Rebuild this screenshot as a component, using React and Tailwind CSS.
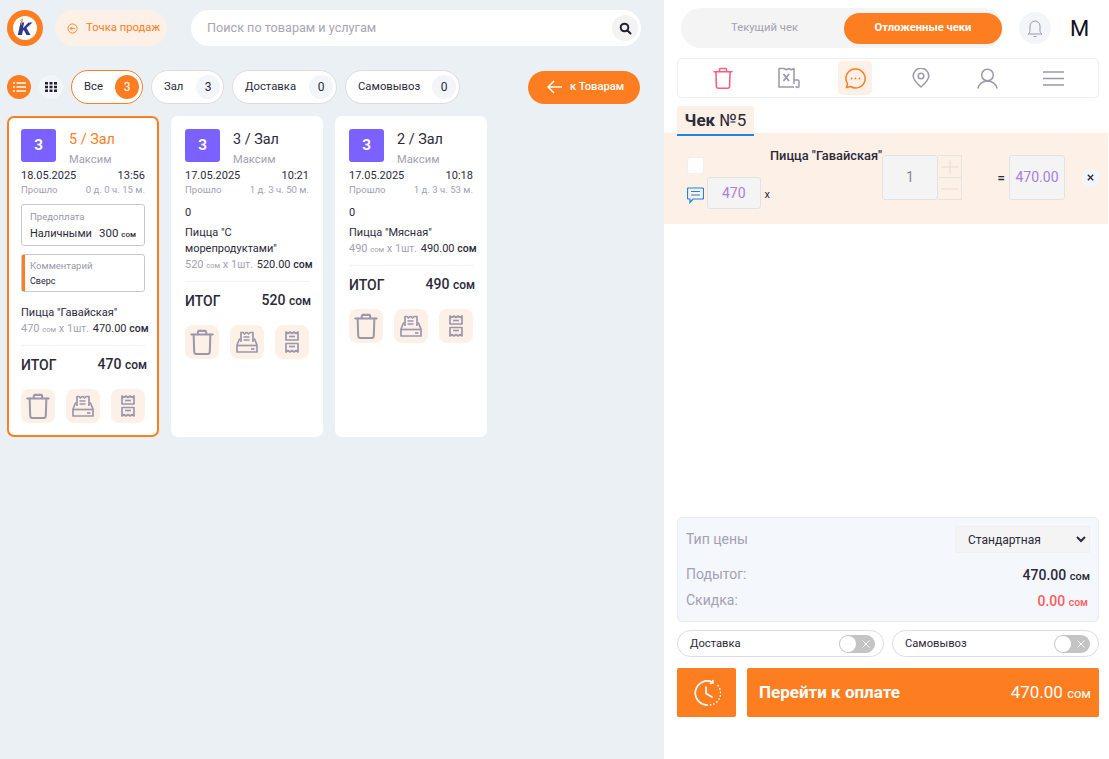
import React from "react";

const Trash = ({ c = "#9b97ad", s = 28, w = 2.2 }) => (
  <svg width={s} height={s} viewBox="0 0 28 28" fill="none" stroke={c} strokeWidth={w} strokeLinecap="round" strokeLinejoin="round">
    <path d="M2.500 6h23" />
    <path d="M9.500 5.500V3.200C9.500 2.500 10 2 10.700 2h6.600c.7 0 1.200.5 1.200 1.200v2.300" />
    <path d="M5 6l.6 18.500c0 1.400 1.100 2.500 2.500 2.500h11.800c1.400 0 2.500-1.100 2.500-2.500L23 6" />
  </svg>
);
const Printer = () => (
  <svg width="22" height="22" viewBox="0 0 22 22" fill="none" stroke="#9b97ad" strokeWidth="1.700" strokeLinejoin="round">
    <path d="M5 11V1.500h2l1.500 1.500L10 1.500h1l1.500 1.500L14 1.500h3V11" />
    <path d="M7.500 6h6M7.500 9h6" />
    <path d="M5 8H3.500L1 14v7h20v-7l-2.500-6H17" />
    <path d="M1 14.500h20" />
    <path d="M15 18h3.500" />
  </svg>
);
const Receipts = () => (
  <svg width="16" height="22" viewBox="0 0 16 22" fill="none" stroke="#9b97ad" strokeWidth="1.700" strokeLinejoin="round">
    <path d="M2 9V1l2 1.500L6 1l2 1.500L10 1l2 1.500L14 1v8z" />
    <path d="M5 5.500h6" />
    <path d="M2 12.500h12V21l-2-1.500L10 21l-2-1.500L6 21l-2-1.500L2 21z" />
    <path d="M5 15.500h6" />
  </svg>
);
const Logo = () => (
  <div className="w-9 h-9 rounded-full bg-[#fc7e21] flex items-center justify-center shrink-0">
    <div className="w-[24px] h-[24px] rounded-full bg-white flex items-center justify-center">
      <svg width="18" height="20" viewBox="0 0 18 20">
        <path d="M4.500 4.500 H8.200 L7 10 L12.500 4.500 H16.500 L10.500 10 L14.500 17 H10.500 L7.800 12 L6.800 13 L6 17 H1.800z" fill="#2f3a8f" />
        <path d="M6.500 1.200 C4.600 1 4.200 3.500 6 3.800 M6.500 1.200 L5.200 7" stroke="#fc7e21" strokeWidth="1" fill="none" />
      </svg>
    </div>
  </div>
);

const Pill = ({ label, n, active, w }) => (
  <div className={`h-[34px] rounded-full bg-white border flex items-center justify-between pl-3 pr-[3px] text-[11.300px] text-[#2b2a3a] ${w} ${active ? "border-[#fc7e21]" : "border-[#dcdde2]"}`}>
    <span>{label}</span>
    <span className={`w-6 h-6 rounded-full flex items-center justify-center text-[12px] ${active ? "bg-[#fc7e21] text-white" : "bg-[#f2f5fa] text-[#2b2a3a]"}`}>{n}</span>
  </div>
);

const Card = ({ active, title, date, time, passed, pre, itemLines, price, sum, itog }) => (
  <div className={`w-[152px] bg-white rounded-[7px] ${active ? "border-2 border-[#fc7e21] px-[12px] pt-[11px] pb-[12px]" : "px-[14px] pt-[13px]"}`}>
    <div className="flex">
      <div className="w-[35px] h-[33px] rounded-[3px] bg-[#7b61ff] text-white font-bold text-[14px] flex items-center justify-center">З</div>
      <div className="ml-[13px] pt-px">
        <div className={`text-[14.400px] leading-[20px] ${active ? "text-[#fc7e21]" : "text-[#2b2a3a]"}`}>{title}</div>
        <div className="text-[11.200px] leading-[14px] mt-[3px] text-[#a3a1b3]">Максим</div>
      </div>
    </div>
    <div className="flex justify-between text-[11px] leading-[14px] mt-[2px] text-[#2b2a3a]">
      <span>{date}</span><span>{time}</span>
    </div>
    <div className="flex justify-between text-[9.600px] leading-[12px] mt-[1px] text-[#a3a1b3]">
      <span>Прошло</span><span>{passed}</span>
    </div>
    {pre ? (
      <>
        <div className="mt-[8px] h-[42px] rounded-[3px] border border-[#c8c7d2] px-2 pt-[6px]">
          <div className="text-[9.600px] leading-[12px] text-[#9a98aa]">Предоплата</div>
          <div className="flex justify-between items-end mt-[1px] text-[#2b2a3a] whitespace-nowrap">
            <span className="text-[11px] leading-[16px]">Наличными</span>
            <span className="text-[11.500px] leading-[16px] translate-y-px">300 <span className="text-[8px] font-medium">сом</span></span>
          </div>
        </div>
        <div className="mt-[8px] h-[38px] rounded-[3px] border border-[#c8c7d2] flex">
          <div className="w-[3px] bg-[#fc7e21]" />
          <div className="pl-[5px] pt-[5px]">
            <div className="text-[9.600px] leading-[12px] text-[#9a98aa]">Комментарий</div>
            <div className="text-[9px] leading-[12px] mt-[3px] text-[#2b2a3a]">Сверс</div>
          </div>
        </div>
      </>
    ) : (
      <div className="text-[11px] leading-[14px] mt-[10px] text-[#2b2a3a]">0</div>
    )}
    <div className={`text-[11px] leading-[16px] text-[#2b2a3a] ${pre ? "mt-[13px]" : "mt-[5px]"}`}>
      {itemLines.map((l) => <div key={l}>{l}</div>)}
    </div>
    <div className="flex items-baseline whitespace-nowrap text-[11px] leading-[16px] w-[130px]">
      <span className="text-[#a3a1b3]">{price} <span className="text-[7.500px]">сом</span> x 1<span className="text-[10px]">шт.</span></span>
      <span className="ml-1 text-[#2b2a3a]">{sum} <span className="text-[10.500px] font-medium">сом</span></span>
    </div>
    <div className="border-t border-[#f0f1f4] mt-[7px] flex justify-between items-center pt-[8px]">
      <span className="text-[14px] leading-[18px] font-medium text-[#2b2a3a]">ИТОГ</span>
      <span className="text-[14px] leading-[20px] font-medium text-[#2b2a3a] -mr-[2px]">{itog} <span className="text-[12px]">сом</span></span>
    </div>
    <div className="flex justify-between mt-[14px]">
      <div className="w-[34px] h-[34px] rounded-[8px] bg-[#fdf0e6] flex items-center justify-center"><Trash s={26} /></div>
      <div className="w-[34px] h-[34px] rounded-[8px] bg-[#fdf0e6] flex items-center justify-center"><Printer /></div>
      <div className="w-[34px] h-[34px] rounded-[8px] bg-[#fdf0e6] flex items-center justify-center"><Receipts /></div>
    </div>
  </div>
);

const Toggle = ({ label }) => (
  <div className="w-[207px] h-[27px] rounded-full border border-[#dcdde2] flex items-center justify-between pl-3 pr-2 text-[11.200px] text-[#2b2a3a]">
    <span className="pt-px">{label}</span>
    <div className="w-9 h-[18px] rounded-full bg-[#c4c4c4] flex items-center justify-between px-px">
      <div className="w-4 h-4 rounded-full bg-white" />
      <svg width="12" height="12" viewBox="0 0 12 12" stroke="#fff" strokeWidth="1" className="mr-[2px]"><path d="M2.500 2.500l7 7M9.500 2.500l-7 7" /></svg>
    </div>
  </div>
);

export default function App() {
  return (
    <div className="flex h-screen w-full overflow-hidden bg-white" style={{ fontFamily: "Roboto, sans-serif" }}>
      <div className="w-[664px] shrink-0 bg-[#ebf0f5] pl-[7px] pt-[10px]">
        <div className="flex items-center h-9">
          <Logo />
          <div className="ml-3 w-[112px] h-9 rounded-full bg-[#fdf0e6] flex items-center pl-3 gap-2 text-[11.250px] text-[#fc7e21] whitespace-nowrap">
            <svg width="11" height="11" viewBox="0 0 12 12" fill="none" stroke="#fc7e21" strokeWidth="1"><circle cx="6" cy="6" r="5" /><path d="M8.500 6h-5M5.500 4l-2 2 2 2" /></svg>
            <span>Точка продаж</span>
          </div>
          <div className="ml-6 w-[450px] h-9 rounded-full bg-white flex items-center justify-between pl-4 pr-[3px]">
            <span className="text-[12.650px] text-[#a8a6b4]">Поиск по товарам и услугам</span>
            <div className="w-[26px] h-[26px] rounded-full bg-[#f3f3f3] flex items-center justify-center">
              <svg width="13" height="13" viewBox="0 0 13 13" fill="none" stroke="#23222e" strokeWidth="2" strokeLinecap="round"><circle cx="5.500" cy="5.500" r="3.800" /><path d="M8.500 8.500l3 3" /></svg>
            </div>
          </div>
        </div>
        <div className="flex items-center mt-6 h-[34px]">
          <div className="w-6 h-6 rounded-full bg-[#fc7e21] flex items-center justify-center">
            <svg width="13" height="10" viewBox="0 0 13 10" stroke="#fff" strokeWidth="1.500"><path d="M3.500 1h9.500M3.500 5h9.500M3.500 9h9.500M0 1h2M0 5h2M0 9h2" /></svg>
          </div>
          <div className="ml-2 w-6 h-6 rounded-full bg-[#f2f5fa] flex items-center justify-center">
            <svg width="12" height="10" viewBox="0 0 12 10" fill="#23222e"><path d="M0 0h3v2.500H0zM4.500 0h3v2.500h-3zM9 0h3v2.500H9zM0 3.800h3v2.500H0zM4.500 3.800h3v2.500h-3zM9 3.800h3v2.500H9zM0 7.500h3V10H0zM4.500 7.500h3V10h-3zM9 7.500h3V10H9z" /></svg>
          </div>
          <div className="ml-2 flex gap-2">
            <Pill label="Все" n="3" active w="w-[72px]" />
            <Pill label="Зал" n="3" w="w-[73px]" />
            <Pill label="Доставка" n="0" w="w-[105px]" />
            <Pill label="Самовывоз" n="0" w="w-[115px]" />
          </div>
          <div className="ml-[68px] w-[112px] h-[33px] rounded-full bg-[#fc7e21] flex items-center pl-[19px] gap-2 text-white text-[11.200px] font-medium whitespace-nowrap">
            <svg width="15" height="14" viewBox="0 0 15 14" fill="none" stroke="#fff" strokeWidth="1.500"><path d="M15 7H1M7 1L1 7l6 6" /></svg>
            <span>к Товарам</span>
          </div>
        </div>
        <div className="flex gap-3 mt-3">
          <Card active title="5 / Зал" date="18.05.2025" time="13:56" passed="0 д. 0 ч. 15 м." pre itemLines={['Пицца "Гавайская"']} price="470" sum="470.00" itog="470" />
          <Card title="3 / Зал" date="17.05.2025" time="10:21" passed="1 д. 3 ч. 50 м." itemLines={['Пицца "С', 'морепродуктами"']} price="520" sum="520.00" itog="520" />
          <Card title="2 / Зал" date="17.05.2025" time="10:18" passed="1 д. 3 ч. 53 м." itemLines={['Пицца "Мясная"']} price="490" sum="490.00" itog="490" />
        </div>
      </div>

      <div className="flex-1 flex flex-col pb-[42px]">
        <div className="flex items-center pl-[17px] pt-2 h-[48px]">
          <div className="w-[322px] h-10 rounded-full bg-[#f4f4f4] flex items-center pr-px">
            <div className="w-[163px] pl-[4px] text-center text-[11.300px] text-[#a3a1b3]">Текущий чек</div>
            <div className="flex-1 h-[31px] rounded-full bg-[#fc7e21] text-white font-bold text-[11.200px] flex items-center justify-center">Отложенные чеки</div>
          </div>
          <div className="ml-4 w-8 h-8 rounded-full bg-[#f2f5fa] flex items-center justify-center">
            <svg width="16" height="19" viewBox="0 0 16 19" fill="none" stroke="#9b97ad" strokeWidth="1"><path d="M1 15c1.500-1 2-2 2-3.500V7a5 5 0 0 1 10 0v4.500c0 1.500.5 2.500 2 3.500z" /><path d="M6.500 17.500h3" /></svg>
          </div>
          <span className="ml-[19px] text-[22px] text-[#0f1020]">М</span>
        </div>
        <div className="ml-[13px] mt-[10px] w-[422px] h-10 rounded-[5px] border border-[#eeeff2] flex items-center justify-around px-[12px]">
          <div className="w-[34px] h-[34px] flex items-center justify-center"><Trash c="#ff5c7c" s={22} w={2} /></div>
          <div className="w-[34px] h-[34px] flex items-center justify-center">
            <svg width="22" height="22" viewBox="0 0 22 22" fill="none" stroke="#9b97ad" strokeWidth="1.500" strokeLinejoin="round"><path d="M16 17V1.500l-2.500 1.200L11 1.500 8.500 2.700 6 1.500 1 1.500v18.500h15" /><path d="M16 13h3.500c.8 0 1.500.7 1.500 1.500V19a1.500 1.500 0 0 1-3 0" /><path d="M5.500 7l5.500 7M11 7l-5.500 7" strokeWidth="1.800" /></svg>
          </div>
          <div className="w-[34px] h-[34px] rounded-[5px] bg-[#fdf0e6] flex items-center justify-center">
            <svg width="21" height="21" viewBox="0 0 21 21" fill="none" stroke="#fc7e21" strokeWidth="1.500"><path d="M10.500 1a9.500 9.500 0 1 1-5 17.500l-4 1 1-3.800A9.500 9.500 0 0 1 10.500 1z" strokeLinejoin="round" /><circle cx="6.500" cy="10.500" r="0.900" fill="#fc7e21" stroke="none" /><circle cx="10.500" cy="10.500" r="0.900" fill="#fc7e21" stroke="none" /><circle cx="14.500" cy="10.500" r="0.900" fill="#fc7e21" stroke="none" /></svg>
          </div>
          <div className="w-[34px] h-[34px] flex items-center justify-center">
            <svg width="18" height="20" viewBox="0 0 18 20" fill="none" stroke="#9b97ad" strokeWidth="1.500"><path d="M9 19C5 15.500 1.200 12 1.200 8a7.800 7.800 0 0 1 15.600 0c0 4-3.800 7.500-7.800 11z" strokeLinejoin="round" /><circle cx="9" cy="8" r="2.800" /></svg>
          </div>
          <div className="w-[34px] h-[34px] flex items-center justify-center">
            <svg width="21" height="21" viewBox="0 0 21 21" fill="none" stroke="#9b97ad" strokeWidth="1.500"><circle cx="10.500" cy="7" r="5.800" /><path d="M.8 20.500c1-4.500 5-7.500 9.700-7.500s8.700 3 9.700 7.500" /></svg>
          </div>
          <div className="w-[34px] h-[34px] flex items-center justify-center">
            <svg width="21" height="15" viewBox="0 0 21 15" stroke="#9b97ad" strokeWidth="1.500"><path d="M0 1h21M0 7.500h21M0 14h21" /></svg>
          </div>
        </div>
        <div className="relative z-10 -mb-[3px] ml-[13px] mt-2 w-[77px] h-[30px] bg-[#fdf0e6] border-b-2 border-[#1b84e7] rounded-t-[3px] flex items-center justify-center text-[17px] leading-none text-[#2b2a3a]">
          <span className="font-bold">Чек</span>&nbsp;№5
        </div>
        <div className="h-[91px] mr-px bg-[#fdf0e6] flex items-start pl-[23px] pt-[22px] pr-[8px] text-[#2b2a3a]">
          <div className="w-[83px]">
            <div className="w-[17px] h-[17px] rounded-[3px] bg-white border border-[#eef0f2] mt-[2px]" />
            <div className="flex items-end mt-[3px] whitespace-nowrap">
              <svg width="17" height="17" viewBox="0 0 17 17" fill="none" stroke="#1b84e7" strokeWidth="1.200" className="mb-[5px] shrink-0"><path d="M1.500 1h14a1 1 0 0 1 1 1v9a1 1 0 0 1-1 1H6l-3 3.500V12H1.500a1 1 0 0 1-1-1V2a1 1 0 0 1 1-1z" /><path d="M4 4.500h9M4 8h9" /></svg>
              <div className="ml-[3px] w-[56px] h-8 rounded-[3px] bg-[#f4f4f4] border border-[#dfe3e3] flex items-center justify-center text-[14px] text-[#a87ee0]">470</div>
              <span className="ml-[4px] mb-[6px] text-[11px]">x</span>
            </div>
          </div>
          <div className="w-[112px] -mt-[6px] text-[12.800px] leading-[14px] font-medium whitespace-nowrap">Пицца "Гавайская"</div>
          <div className="flex">
            <div className="w-[56px] h-[45px] rounded-[3px] bg-[#f4f4f4] border border-[#dfe3e3] flex items-center justify-center text-[14px] text-[#86858f]">1</div>
            <div className="w-[24px] h-[45px] border border-l-0 border-[#e6e4e0] flex flex-col">
              <div className="h-[22px] flex items-center justify-center border-b border-[#e6e4e0]">
                <svg width="18" height="14" viewBox="0 0 18 14" stroke="#e2dfda" strokeWidth="1"><path d="M0 7h18M9 0v14" /></svg>
              </div>
              <div className="flex-1 flex items-center justify-center">
                <svg width="18" height="2" viewBox="0 0 18 2" stroke="#e2dfda" strokeWidth="1"><path d="M0 1h18" /></svg>
              </div>
            </div>
          </div>
          <div className="w-[47px] h-[45px] flex items-center justify-end pr-[4px] text-[13px] font-bold">=</div>
          <div className="w-[56px] h-[45px] rounded-[3px] bg-[#f4f4f4] border border-[#dfe3e3] flex items-center justify-center text-[14px] text-[#a87ee0]">470.00</div>
          <div className="ml-4 mt-[13px] w-[19px] h-[19px] rounded-full bg-[#f2f5fa] flex items-center justify-center">
            <svg width="7" height="7" viewBox="0 0 7 7" stroke="#2b2a3a" strokeWidth="1.300"><path d="M.8.8l5.400 5.400M6.200.8L.8 6.200" /></svg>
          </div>
        </div>
        <div className="flex-1" />
        <div className="ml-[13px] w-[422px] h-[105px] rounded-[5px] bg-[#f4f7fb] border border-[#e8edf2] px-[8px] pt-[8px]">
          <div className="flex items-center justify-between h-[27px]">
            <span className="text-[14px] text-[#a3a1b3]">Тип цены</span>
            <select className="w-[135px] h-[27px] rounded-[2px] bg-[#f4f4f4] border border-[#eef0f2] pl-2 text-[12px] text-[#2b2a3a] outline-none" defaultValue="s">
              <option value="s">Стандартная</option>
            </select>
          </div>
          <div className="flex justify-between items-start mt-[12px] h-[26px]">
            <span className="text-[14px] leading-[18px] text-[#a3a1b3]">Подытог:</span>
            <span className="text-[14px] leading-[20px] font-medium text-[#2b2a3a]">470.00 <span className="text-[11px]">сом</span></span>
          </div>
          <div className="flex justify-between items-start">
            <span className="text-[14px] leading-[18px] text-[#a3a1b3]">Скидка:</span>
            <span className="text-[14px] leading-[20px] font-medium text-[#ff5c60] pr-[2px]">0.00 <span className="text-[10.500px]">сом</span></span>
          </div>
        </div>
        <div className="ml-[13px] mt-2 flex gap-2 w-[422px]">
          <Toggle label="Доставка" />
          <Toggle label="Самовывоз" />
        </div>
        <div className="ml-[13px] mt-[11px] flex gap-[11px] w-[422px]">
          <div className="w-[59px] h-[49px] rounded-[2px] bg-[#fc7e21] flex items-center justify-center">
            <svg width="28" height="28" viewBox="0 0 28 28" fill="none" stroke="#fff" strokeWidth="1.700" strokeLinecap="round" strokeLinejoin="round">
              <path d="M19.500 3.200A12 12 0 1 0 14 26" />
              <path d="M19.800 1.500l.2 2.500-2.600.4" />
              <path d="M14 26A12 12 0 0 0 24 5.500" strokeDasharray="0.100 3.400" />
              <path d="M13 8v6.500l6 3.500" />
            </svg>
          </div>
          <div className="flex-1 h-[49px] rounded-[2px] bg-[#fc7e21] text-white flex items-center justify-between pl-3 pr-2">
            <span className="text-[17px] font-bold">Перейти к оплате</span>
            <span className="text-[17px]">470.00 <span className="text-[13px]">сом</span></span>
          </div>
        </div>
      </div>
    </div>
  );
}
